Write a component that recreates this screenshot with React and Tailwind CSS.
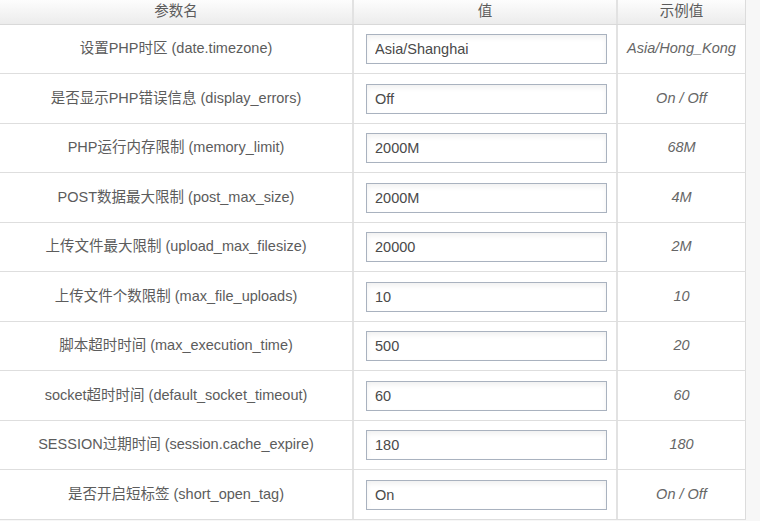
import React from 'react'

const rows = [
  { name: '设置PHP时区 (date.timezone)', value: 'Asia/Shanghai', example: 'Asia/Hong_Kong' },
  { name: '是否显示PHP错误信息 (display_errors)', value: 'Off', example: 'On / Off' },
  { name: 'PHP运行内存限制 (memory_limit)', value: '2000M', example: '68M' },
  { name: 'POST数据最大限制 (post_max_size)', value: '2000M', example: '4M' },
  { name: '上传文件最大限制 (upload_max_filesize)', value: '20000', example: '2M' },
  { name: '上传文件个数限制 (max_file_uploads)', value: '10', example: '10' },
  { name: '脚本超时时间 (max_execution_time)', value: '500', example: '20' },
  { name: 'socket超时时间 (default_socket_timeout)', value: '60', example: '60' },
  { name: 'SESSION过期时间 (session.cache_expire)', value: '180', example: '180' },
  { name: '是否开启短标签 (short_open_tag)', value: 'On', example: 'On / Off' },
]

function Row({ row, index }) {
  const h = index % 2 === 0 ? 'h-[49px]' : 'h-[50px]'
  return (
    <div className={`flex ${h} border-b border-[#dedede] bg-white`}>
      <div className="w-[354px] shrink-0 border-r-2 border-[#e2e2e2] flex items-center justify-center text-[14.5px] text-[#5c5c5c]">
        {row.name}
      </div>
      <div className="w-[264px] shrink-0 border-r-2 border-[#e2e2e2] flex items-center pl-[12px]">
        <input
          defaultValue={row.value}
          className="w-[241px] h-[30px] border border-[#a9b2bf] bg-white px-[8px] text-[14.5px] text-[#4a4a4a] shadow-[inset_0_3px_5px_rgba(0,0,0,0.06)] outline-none"
        />
      </div>
      <div className="w-[128px] shrink-0 border-r border-[#dcdcdc] flex items-center justify-center text-[14.5px] italic text-[#666]">
        {row.example}
      </div>
    </div>
  )
}

function App() {
  return (
    <div
      className="w-[760px] h-[521px] overflow-hidden bg-[#f7f7f7]"
      style={{ fontFamily: '"Liberation Sans", Arial, "Noto Sans CJK SC", sans-serif' }}
    >
      <div className="w-[746px]">
        <div className="flex h-[25px] border-b border-[#d9d9d9] bg-gradient-to-b from-[#fdfdfd] to-[#ececec] text-[14.5px] text-[#5c5c5c]">
          <div className="w-[354px] shrink-0 border-r-2 border-[#e2e2e2] flex items-center justify-center">参数名</div>
          <div className="w-[264px] shrink-0 border-r-2 border-[#e2e2e2] flex items-center justify-center">值</div>
          <div className="w-[128px] shrink-0 border-r border-[#dcdcdc] flex items-center justify-center">示例值</div>
        </div>
        {rows.map((row, i) => (
          <Row key={i} row={row} index={i} />
        ))}
      </div>
    </div>
  )
}

export default App
